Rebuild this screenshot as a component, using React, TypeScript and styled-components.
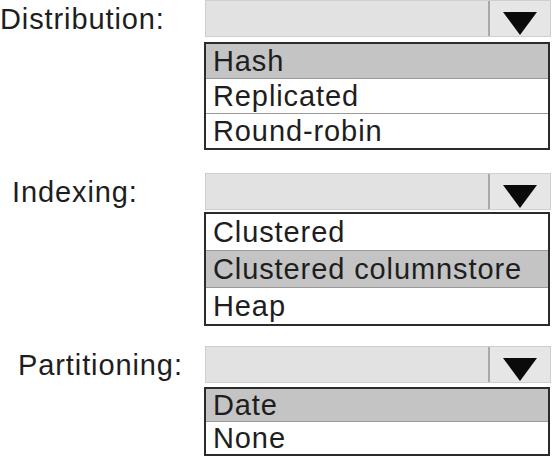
import styled, { createGlobalStyle } from "styled-components";

const GlobalStyle = createGlobalStyle`
    html, body {
        margin: 0;
        padding: 0;
        background: #ffffff;
    }
    body {
        font-family: "Liberation Sans", Arial, sans-serif;
        color: #1c1c1c;
    }
`;

const Page = styled.div`
    width: 552px;
    height: 458px;
    overflow: hidden;
    display: flex;
    flex-direction: column;
`;

// one label + dropdown block
const Section = styled.div<{ $top: number }>`
    display: grid;
    grid-template-columns: 204px 347px;
    margin-top: ${(p) => p.$top}px;
`;

const Label = styled.div<{ $indent: number }>`
    height: 39px;
    display: flex;
    align-items: center;
    padding-left: ${(p) => p.$indent}px;
    font-size: 29px;
    letter-spacing: 0.9px;
    color: #1e1e1e;
`;

const Control = styled.div<{ $gap: number }>`
    display: flex;
    flex-direction: column;
    gap: ${(p) => p.$gap}px;
`;

const Select = styled.div`
    height: 37px;
    display: grid;
    grid-template-columns: 1fr 60px;
    border: 1px solid #cfcfcf;
    background: #e2e2e2;
    box-sizing: border-box;
    margin-left: 1px;
`;

const Field = styled.div`
    border-right: 2px solid #a9a9a9;
`;

const ArrowCell = styled.div`
    display: flex;
    align-items: flex-end;
    justify-content: center;
    padding-bottom: 1px;
    background: #e6e6e6;
`;

const List = styled.div`
    border: 2px solid #2b2b2b;
    background: #ffffff;
    display: flex;
    flex-direction: column;
    margin-right: 1px;
`;

const Option = styled.div<{ $selected?: boolean; $height: number }>`
    height: ${(p) => p.$height}px;
    display: flex;
    align-items: center;
    padding-left: 7px;
    font-size: 29px;
    letter-spacing: 0.9px;
    color: #1e1e1e;
    background: ${(p) => (p.$selected ? "#c4c4c4" : "#ffffff")};

    &:not(:last-child) {
        border-bottom: 1px solid #9a9a9a;
    }
`;

const Arrow = () => (
    <svg width="34" height="23" viewBox="0 0 34 23">
        <polygon points="0,0 34,0 17,23" fill="#0a0a0a" />
    </svg>
);

interface DropdownProps {
    label: string;
    indent: number;
    top: number;
    gap: number;
    rowHeight: number;
    options: string[];
    selected: number;
}

const Dropdown = ({ label, indent, top, gap, rowHeight, options, selected }: DropdownProps) => (
    <Section $top={top}>
        <Label $indent={indent}>{label}</Label>
        <Control $gap={gap}>
            <Select>
                <Field />
                <ArrowCell>
                    <Arrow />
                </ArrowCell>
            </Select>
            <List>
                {options.map((o, i) => (
                    <Option key={o} $height={rowHeight} $selected={i === selected}>
                        {o}
                    </Option>
                ))}
            </List>
        </Control>
    </Section>
);

export default function App() {
    return (
        <>
            <GlobalStyle />
            <Page>
                <Dropdown
                    label="Distribution:"
                    indent={0}
                    top={0}
                    gap={5}
                    rowHeight={34}
                    options={["Hash", "Replicated", "Round-robin"]}
                    selected={0}
                />
                <Dropdown
                    label="Indexing:"
                    indent={12}
                    top={23}
                    gap={2}
                    rowHeight={36}
                    options={["Clustered", "Clustered columnstore", "Heap"]}
                    selected={1}
                />
                <Dropdown
                    label="Partitioning:"
                    indent={18}
                    top={20}
                    gap={4}
                    rowHeight={32}
                    options={["Date", "None"]}
                    selected={0}
                />
            </Page>
        </>
    );
}
